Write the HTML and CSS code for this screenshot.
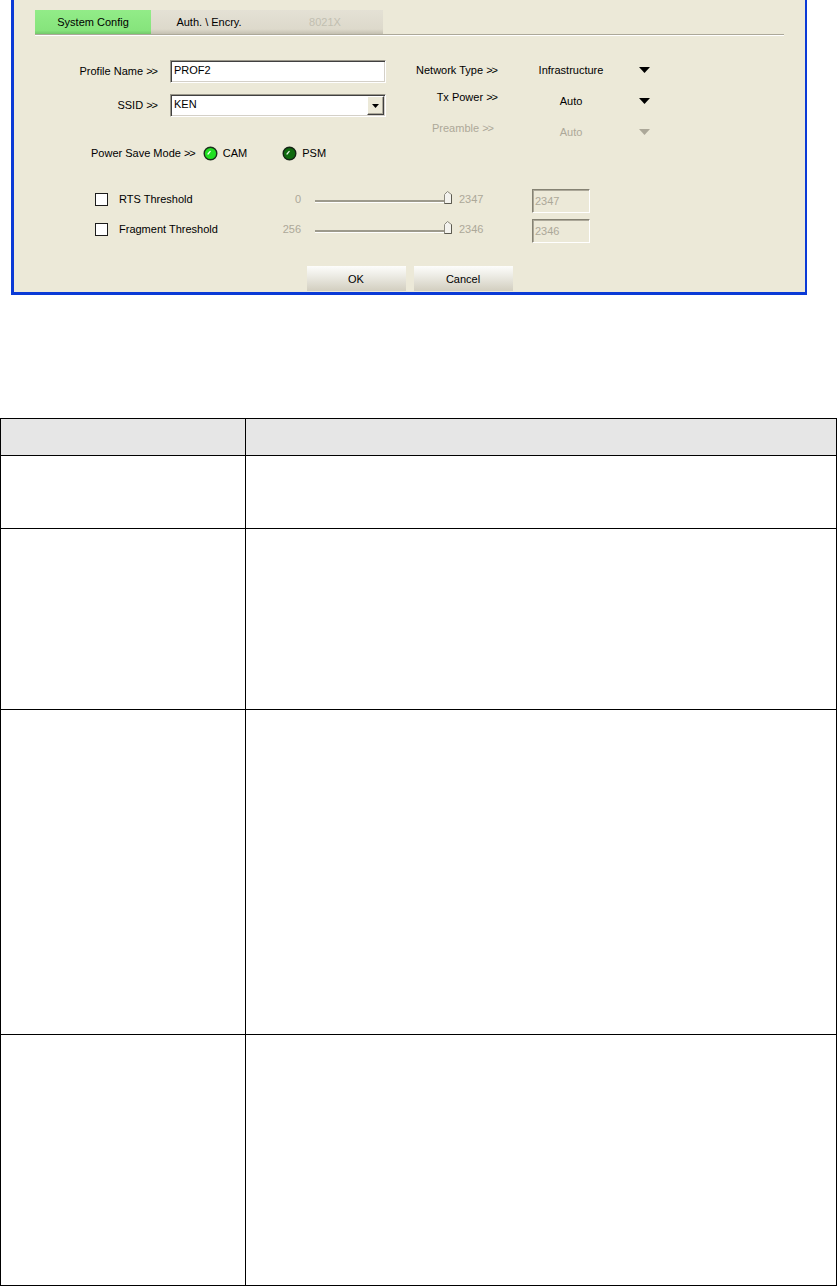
FILE: index.html
```html
<!DOCTYPE html>
<html lang="en">
<head>
    <meta charset="UTF-8">
    <meta name="viewport" content="width=device-width, initial-scale=1.0">
    <title>Profile - System Config</title>
    <link rel="stylesheet" href="styles.css">
</head>
<body>
    <div class="dialog">
        <div class="tabs">
            <div class="tab active">System Config</div>
            <div class="tab">Auth. \ Encry.</div>
            <div class="tab disabled">8021X</div>
        </div>

        <div class="settings">
            <div class="left-col">
                <div class="field">
                    <label class="field-label">Profile Name <span class="chev">&gt;&gt;</span></label>
                    <div class="textbox">PROF2</div>
                </div>
                <div class="field field-ssid">
                    <label class="field-label">SSID <span class="chev">&gt;&gt;</span></label>
                    <div class="textbox combo">
                        <span>KEN</span>
                        <span class="combo-btn">
                            <svg width="7" height="4" viewBox="0 0 7 4"><polygon points="0,0 7,0 3.5,4" fill="#000"/></svg>
                        </span>
                    </div>
                </div>
                <div class="power">
                    <span>Power Save Mode <span class="chev">&gt;&gt;</span></span>
                    <span class="led-option">
                        <svg class="led" width="15" height="15" viewBox="0 0 15 15"><circle cx="7.5" cy="7.5" r="6.3" fill="#22e022" stroke="#1b2f1b" stroke-width="1.4"/><path d="M5 8 L7.2 5.4" stroke="#fff" stroke-width="1.2" stroke-linecap="round"/></svg>
                        CAM
                    </span>
                    <span class="led-option psm">
                        <svg class="led" width="15" height="15" viewBox="0 0 15 15"><circle cx="7.5" cy="7.5" r="6.3" fill="#0f6a0f" stroke="#142414" stroke-width="1.4"/><path d="M5 8 L7.2 5.4" stroke="#e6f2e6" stroke-width="1.2" stroke-linecap="round"/></svg>
                        PSM
                    </span>
                </div>
            </div>

            <div class="right-col">
                <div class="option">
                    <span class="option-label">Network Type <span class="chev">&gt;&gt;</span></span>
                    <span class="option-value">Infrastructure</span>
                    <svg class="arrow" width="11" height="6" viewBox="0 0 11 6"><polygon points="0,0 11,0 5.5,6" fill="#000"/></svg>
                </div>
                <div class="option shifted">
                    <span class="option-label">Tx Power <span class="chev">&gt;&gt;</span></span>
                    <span class="option-value">Auto</span>
                    <svg class="arrow" width="11" height="6" viewBox="0 0 11 6"><polygon points="0,0 11,0 5.5,6" fill="#000"/></svg>
                </div>
                <div class="option shifted disabled">
                    <span class="option-label short">Preamble <span class="chev">&gt;&gt;</span></span>
                    <span class="option-value">Auto</span>
                    <svg class="arrow" width="11" height="6" viewBox="0 0 11 6"><polygon points="0,0 11,0 5.5,6" fill="#aca899"/></svg>
                </div>
            </div>
        </div>

        <div class="thresholds">
            <div class="threshold">
                <span class="checkbox"></span>
                <span class="threshold-name">RTS Threshold</span>
                <span class="range-min">0</span>
                <span class="track">
                    <svg class="thumb" width="8" height="13" viewBox="0 0 8 13"><polygon points="0.5,3.5 3.5,0.5 7.5,3.5 7.5,12.5 0.5,12.5" fill="#f4f3ee" stroke="#8c8a7e"/><path d="M7.5 3.5 V12.5 H0.5" stroke="#5c5a50" fill="none"/></svg>
                </span>
                <span class="range-max">2347</span>
                <span class="valuebox">2347</span>
            </div>
            <div class="threshold">
                <span class="checkbox"></span>
                <span class="threshold-name">Fragment Threshold</span>
                <span class="range-min">256</span>
                <span class="track">
                    <svg class="thumb" width="8" height="13" viewBox="0 0 8 13"><polygon points="0.5,3.5 3.5,0.5 7.5,3.5 7.5,12.5 0.5,12.5" fill="#f4f3ee" stroke="#8c8a7e"/><path d="M7.5 3.5 V12.5 H0.5" stroke="#5c5a50" fill="none"/></svg>
                </span>
                <span class="range-max">2346</span>
                <span class="valuebox">2346</span>
            </div>
        </div>

        <div class="buttons">
            <button class="btn">OK</button>
            <button class="btn">Cancel</button>
        </div>
    </div>

    <table class="spec">
        <colgroup>
            <col class="col-name">
            <col class="col-desc">
        </colgroup>
        <tr class="head"><th></th><th></th></tr>
        <tr class="row-1"><td></td><td></td></tr>
        <tr class="row-2"><td></td><td></td></tr>
        <tr class="row-3"><td></td><td></td></tr>
        <tr class="row-4"><td></td><td></td></tr>
    </table>
</body>
</html>
```

FILE: styles.css
```css
body {
    margin: 0;
    background-color: #fff;
    font-family: "Liberation Sans", Arial, sans-serif;
    font-size: 11px;
    line-height: 13px;
    color: #000;
}

/* dialog window */
.dialog {
    box-sizing: border-box;
    width: 796px;
    height: 295px;
    margin-left: 11px;
    padding-top: 10px;
    background-color: #ece9d8;
    border-left: 3px solid #0a3ad6;
    border-right: 2px solid #0a3ad6;
    border-bottom: 3px solid #0a3ad6;
}
.tabs {
    display: flex;
    margin: 0 21px;
    border-bottom: 1px solid #aca899;
    box-shadow: 0 1px 0 #fff;
}
.tab {
    width: 116px;
    height: 24px;
    line-height: 24px;
    text-align: center;
    background: linear-gradient(#e4e1d5, #ddd9cb 80%, #c4c0b1);
}
.tab.active {
    background: linear-gradient(#92ec88, #86e47c 85%, #74c86b);
}
.tab.disabled {
    color: #c2bfb1;
}
.chev {
    letter-spacing: -1px;
}

.settings {
    display: flex;
    margin-top: 25px;
}
.left-col {
    width: 386px;
}
.field {
    display: flex;
    align-items: center;
}
.field-ssid {
    margin-top: 11px;
}
.field-label {
    width: 143px;
    margin-right: 13px;
    text-align: right;
}
.textbox {
    box-sizing: border-box;
    width: 216px;
    height: 23px;
    padding: 3px 0 0 3px;
    background-color: #fff;
    border: 1px solid;
    border-color: #9a978a #fff #fff #9a978a;
    box-shadow: inset 1px 1px 0 #404040, inset -1px -1px 0 #d4d0c8;
}
.combo {
    display: flex;
    justify-content: space-between;
    padding-right: 1px;
}
.combo-btn {
    display: flex;
    align-items: center;
    justify-content: center;
    width: 15px;
    height: 17px;
    margin-top: -2px;
    background-color: #ece9d8;
    border: 1px solid;
    border-color: #fff #404040 #404040 #fff;
    box-shadow: inset -1px -1px 0 #aca899;
}

.power {
    display: flex;
    align-items: center;
    height: 16px;
    margin: 28px 0 0 77px;
}
.led-option {
    display: flex;
    align-items: center;
    margin-left: 8px;
}
.led-option.psm {
    margin-left: 35px;
}
.led {
    margin-right: 5px;
}

.option {
    display: flex;
    align-items: center;
    height: 20px;
}
.option.shifted {
    margin-top: 11px;
}
.option.shifted .option-label {
    margin-bottom: 7px;
}
.option-label {
    width: 97px;
    text-align: right;
}
.option-label.short {
    width: 93px;
    margin-right: 4px;
}
.option-value {
    width: 110px;
    margin-left: 19px;
    text-align: center;
}
.arrow {
    margin-left: 13px;
}
.option.disabled {
    color: #aca899;
}

/* threshold sliders */
.thresholds {
    display: flex;
    flex-direction: column;
    gap: 6px;
    margin: 28px 0 0 81px;
}
.threshold {
    display: flex;
    align-items: center;
    height: 24px;
}
.checkbox {
    box-sizing: border-box;
    width: 13px;
    height: 13px;
    margin-bottom: 3px;
    background-color: #fff;
    border: 1px solid #1c1c1c;
}
.threshold-name {
    width: 146px;
    margin-left: 11px;
    margin-bottom: 3px;
}
.range-min {
    width: 36px;
    margin-bottom: 3px;
    text-align: right;
    color: #aca899;
}
.track {
    position: relative;
    width: 137px;
    height: 2px;
    margin-left: 14px;
    margin-top: 1px;
    background-color: #9d9a8c;
    border-bottom: 1px solid #fff;
}
.thumb {
    position: absolute;
    right: 0;
    top: -9px;
}
.range-max {
    width: 73px;
    margin-left: 7px;
    margin-bottom: 4px;
    color: #aca899;
}
.valuebox {
    box-sizing: border-box;
    width: 58px;
    height: 24px;
    padding: 5px 0 0 2px;
    color: #aca899;
    border: 1px solid;
    border-color: #858273 #fff #fff #858273;
    box-shadow: inset 1px 1px 0 #aca899;
}

.buttons {
    display: flex;
    justify-content: center;
    gap: 8px;
    margin-top: 23px;
}
.btn {
    width: 99px;
    height: 25px;
    padding: 0;
    font-family: "Liberation Sans", Arial, sans-serif;
    font-size: 11px;
    color: #000;
    border: none;
    background: linear-gradient(#fdfdfb, #ecebe4 40%, #d2cebf);
}

/* description table */
.spec {
    margin-top: 123px;
    width: 837px;
    table-layout: fixed;
    border-collapse: collapse;
}
.col-name {
    width: 245px;
}
.spec th,
.spec td {
    padding: 0;
    border: 1px solid #000;
}
.spec .head th {
    height: 36px;
    background-color: #e6e6e6;
}
.row-1 td {
    height: 72px;
}
.row-2 td {
    height: 180px;
}
.row-3 td {
    height: 324px;
}
.row-4 td {
    height: 250px;
}
```
